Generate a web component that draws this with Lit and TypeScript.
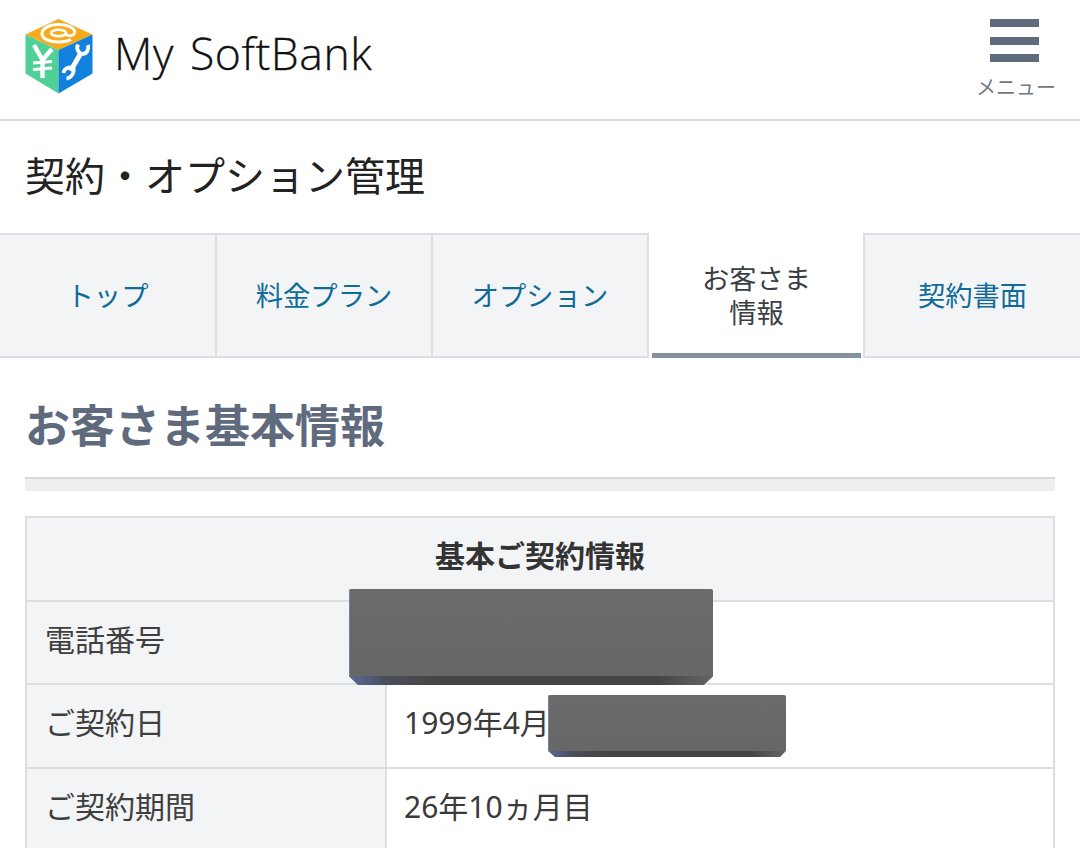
import { LitElement, html, css, svg } from "lit";
import { customElement } from "lit/decorators.js";

const logo = svg`<svg class="logo" viewBox="0 0 68 75" width="68" height="75" aria-hidden="true">
  <polygon points="33.5,0 0.5,15.5 33.5,31 67.5,15.5" fill="#f6aa1c"/>
  <polygon points="0.5,15.5 33.5,31 33.5,74.5 0.5,54.5" fill="#4fd096"/>
  <polygon points="67.5,15.5 33.5,31 33.5,74.5 67.5,54.5" fill="#1280dd"/>
  <g fill="none" stroke="#fff">
    <ellipse cx="33.5" cy="14" rx="7.5" ry="3.2" stroke-width="2.6"/>
    <path d="M50 14 C49.5 8.5 42 5.5 33.5 5.5 C24 5.5 17 9.5 17 14.5 C17 20 25 23 33.5 23 C38.5 23 43 22 46 20.5" stroke-width="3"/>
    <path d="M41 14 C41 17.5 47 18 50 14" stroke-width="2.6"/>
  </g>
  <g fill="none" stroke="#fff" stroke-width="4.4">
    <path d="M9 26 L17.5 41 L27 30"/>
    <path d="M17.5 40 V59"/>
    <path d="M8 44 L27 42.5 M8 50.5 L27 49" stroke-width="3"/>
  </g>
  <g fill="none" stroke="#fff">
    <path d="M45.5 52 L56.5 33" stroke-width="5"/>
    <path d="M53 25.5 C51 30 53.5 35 58 34.8 C62 34.5 64 30.5 63 26" stroke-width="3.8"/>
    <path d="M48.5 49.5 C44 47 39 49.5 38.5 54 M48.5 49.5 C49.5 54 46 59 41.5 59.5" stroke-width="3.8"/>
  </g>
</svg>`;

@customElement("app-root")
export class AppRoot extends LitElement {
  static styles = css`
    :host {
      display: block;
      position: relative;
      width: 1080px;
      height: 848px;
      overflow: hidden;
      background: #fff;
      color: #333;
      font-family: "Noto Sans", "Noto Sans CJK JP", sans-serif;
    }
    .header {
      height: 119px;
      border-bottom: 2px solid #dcdcdc;
      display: flex;
      align-items: flex-start;
      justify-content: space-between;
    }
    .brand {
      display: flex;
      align-items: center;
      padding: 18px 0 0 25px;
      gap: 21px;
    }
    .logo { display: block; }
    .brand-name {
      font-family: "Open Sans", sans-serif;
      font-weight: 300;
      font-size: 44.5px;
      line-height: 70px;
      padding-bottom: 7px;
      color: #111;
      white-space: nowrap;
      letter-spacing: 0.55px;
      word-spacing: 4px;
      -webkit-text-stroke: 0.3px #111;
    }
    .menu {
      width: 78px;
      margin: 19px 25px 0 0;
      display: flex;
      flex-direction: column;
      align-items: flex-start;
    }
    .bars {
      width: 49px;
      height: 43px;
      margin-left: 13px;
      display: flex;
      flex-direction: column;
      justify-content: space-between;
    }
    .bars i { display: block; height: 8px; background: #5f6b7c; }
    .menu-label {
      margin: 13px 0 0 -1px;
      font-size: 20px;
      line-height: 26px;
      color: #6f7885;
      white-space: nowrap;
    }
    .title {
      height: 112px;
      display: flex;
      align-items: center;
      padding: 0 0 6px 25px;
      font-size: 40px;
      color: #222;
      margin: 0;
      font-weight: 400;
      box-sizing: border-box;
    }
    .tabs {
      display: grid;
      grid-template-columns: 217px 216px 216px 214px 217px;
      height: 124px;
    }
    .tab {
      box-sizing: border-box;
      background: #f2f4f6;
      border: 2px solid #dcdedf;
      border-left: 0;
      display: flex;
      align-items: center;
      justify-content: center;
      font-size: 27.3px;
      line-height: 34px;
      color: #0f6b98;
      text-align: center;
    }
    .tab:last-child { border-right: 0; border-left: 2px solid #dcdedf; }
    .tab.active {
      background: #fff;
      border: 0;
      color: #3a3f44;
      margin: 0 2px 0 3px;
      padding-top: 5px;
      border-bottom: 5px solid #8492a0;
      height: 125px;
    }
    .section-head {
      margin: 0 25px;
      height: 120px;
      box-sizing: border-box;
      padding-top: 44px;
      font-size: 45px;
      line-height: 50px;
      font-weight: 700;
      color: #5f6b7c;
    }
    .section-head::after {
      content: "";
      display: block;
      margin-top: 26px;
      height: 12px;
      background: #eeeeee;
      border-top: 2px solid #d8d8d8;
    }
    .table {
      margin: 39px 25px 0;
      border: 2px solid #dcdedf;
      border-bottom: 0;
      display: grid;
      grid-template-columns: 360px 1fr;
      grid-auto-rows: 83.7px;
      font-size: 30px;
    }
    .table > div {
      display: flex;
      align-items: center;
      box-sizing: border-box;
      padding-bottom: 10px;
      border-bottom: 2px solid #dcdedf;
    }
    .table-title {
      grid-column: 1 / -1;
      justify-content: center;
      background: #f2f4f6;
      font-weight: 700;
      font-size: 30px;
      color: #333;
    }
    .table .label {
      background: #f2f4f6;
      padding-left: 18px;
      border-right: 2px solid #dcdedf;
      color: #3f3f3f;
    }
    .table .value { padding-left: 17px; color: #3a3a3a; }
    .redact {
      position: absolute;
      background: linear-gradient(#6b6b6b, #676767 70%);
      box-shadow: inset 1px 0 0 #76829f;
    }
    .redact::after {
      content: "";
      position: absolute;
      left: 0;
      right: 0;
      bottom: 0;
      background: linear-gradient(90deg, #5a6a9c, #4b4e58 10%, #454545 25%, #454545 85%, #666);
      clip-path: polygon(0 0, 100% 0, 97.5% 100%, 2.5% 100%);
    }
    .r1 { left: 349px; top: 589px; width: 364px; height: 96px; border-radius: 2px; clip-path: polygon(0 0, 100% 0, 100% 91%, 97.5% 100%, 2.5% 100%, 0 91%); }
    .r1::after { height: 9px; }
    .r2 { left: 548px; top: 695px; width: 238px; height: 62px; border-radius: 2px; clip-path: polygon(0 0, 100% 0, 100% 90%, 97.5% 100%, 3% 100%, 0 90%); }
    .r2::after { height: 6px; }
  `;

  render() {
    const tabs = ["トップ", "料金プラン", "オプション"];
    return html`
      <header class="header">
        <div class="brand">${logo}<span class="brand-name">My SoftBank</span></div>
        <div class="menu">
          <div class="bars"><i></i><i></i><i></i></div>
          <div class="menu-label">メニュー</div>
        </div>
      </header>
      <h1 class="title">契約・オプション管理</h1>
      <nav class="tabs">
        ${tabs.map((t) => html`<div class="tab">${t}</div>`)}
        <div class="tab active">お客さま<br />情報</div>
        <div class="tab">契約書面</div>
      </nav>
      <h2 class="section-head">お客さま基本情報</h2>
      <div class="table">
        <div class="table-title">基本ご契約情報</div>
        <div class="label">電話番号</div><div class="value"></div>
        <div class="label">ご契約日</div><div class="value">1999年4月</div>
        <div class="label">ご契約期間</div><div class="value">26年10ヵ月目</div>
      </div>
      <div class="redact r1"></div>
      <div class="redact r2"></div>
    `;
  }
}
